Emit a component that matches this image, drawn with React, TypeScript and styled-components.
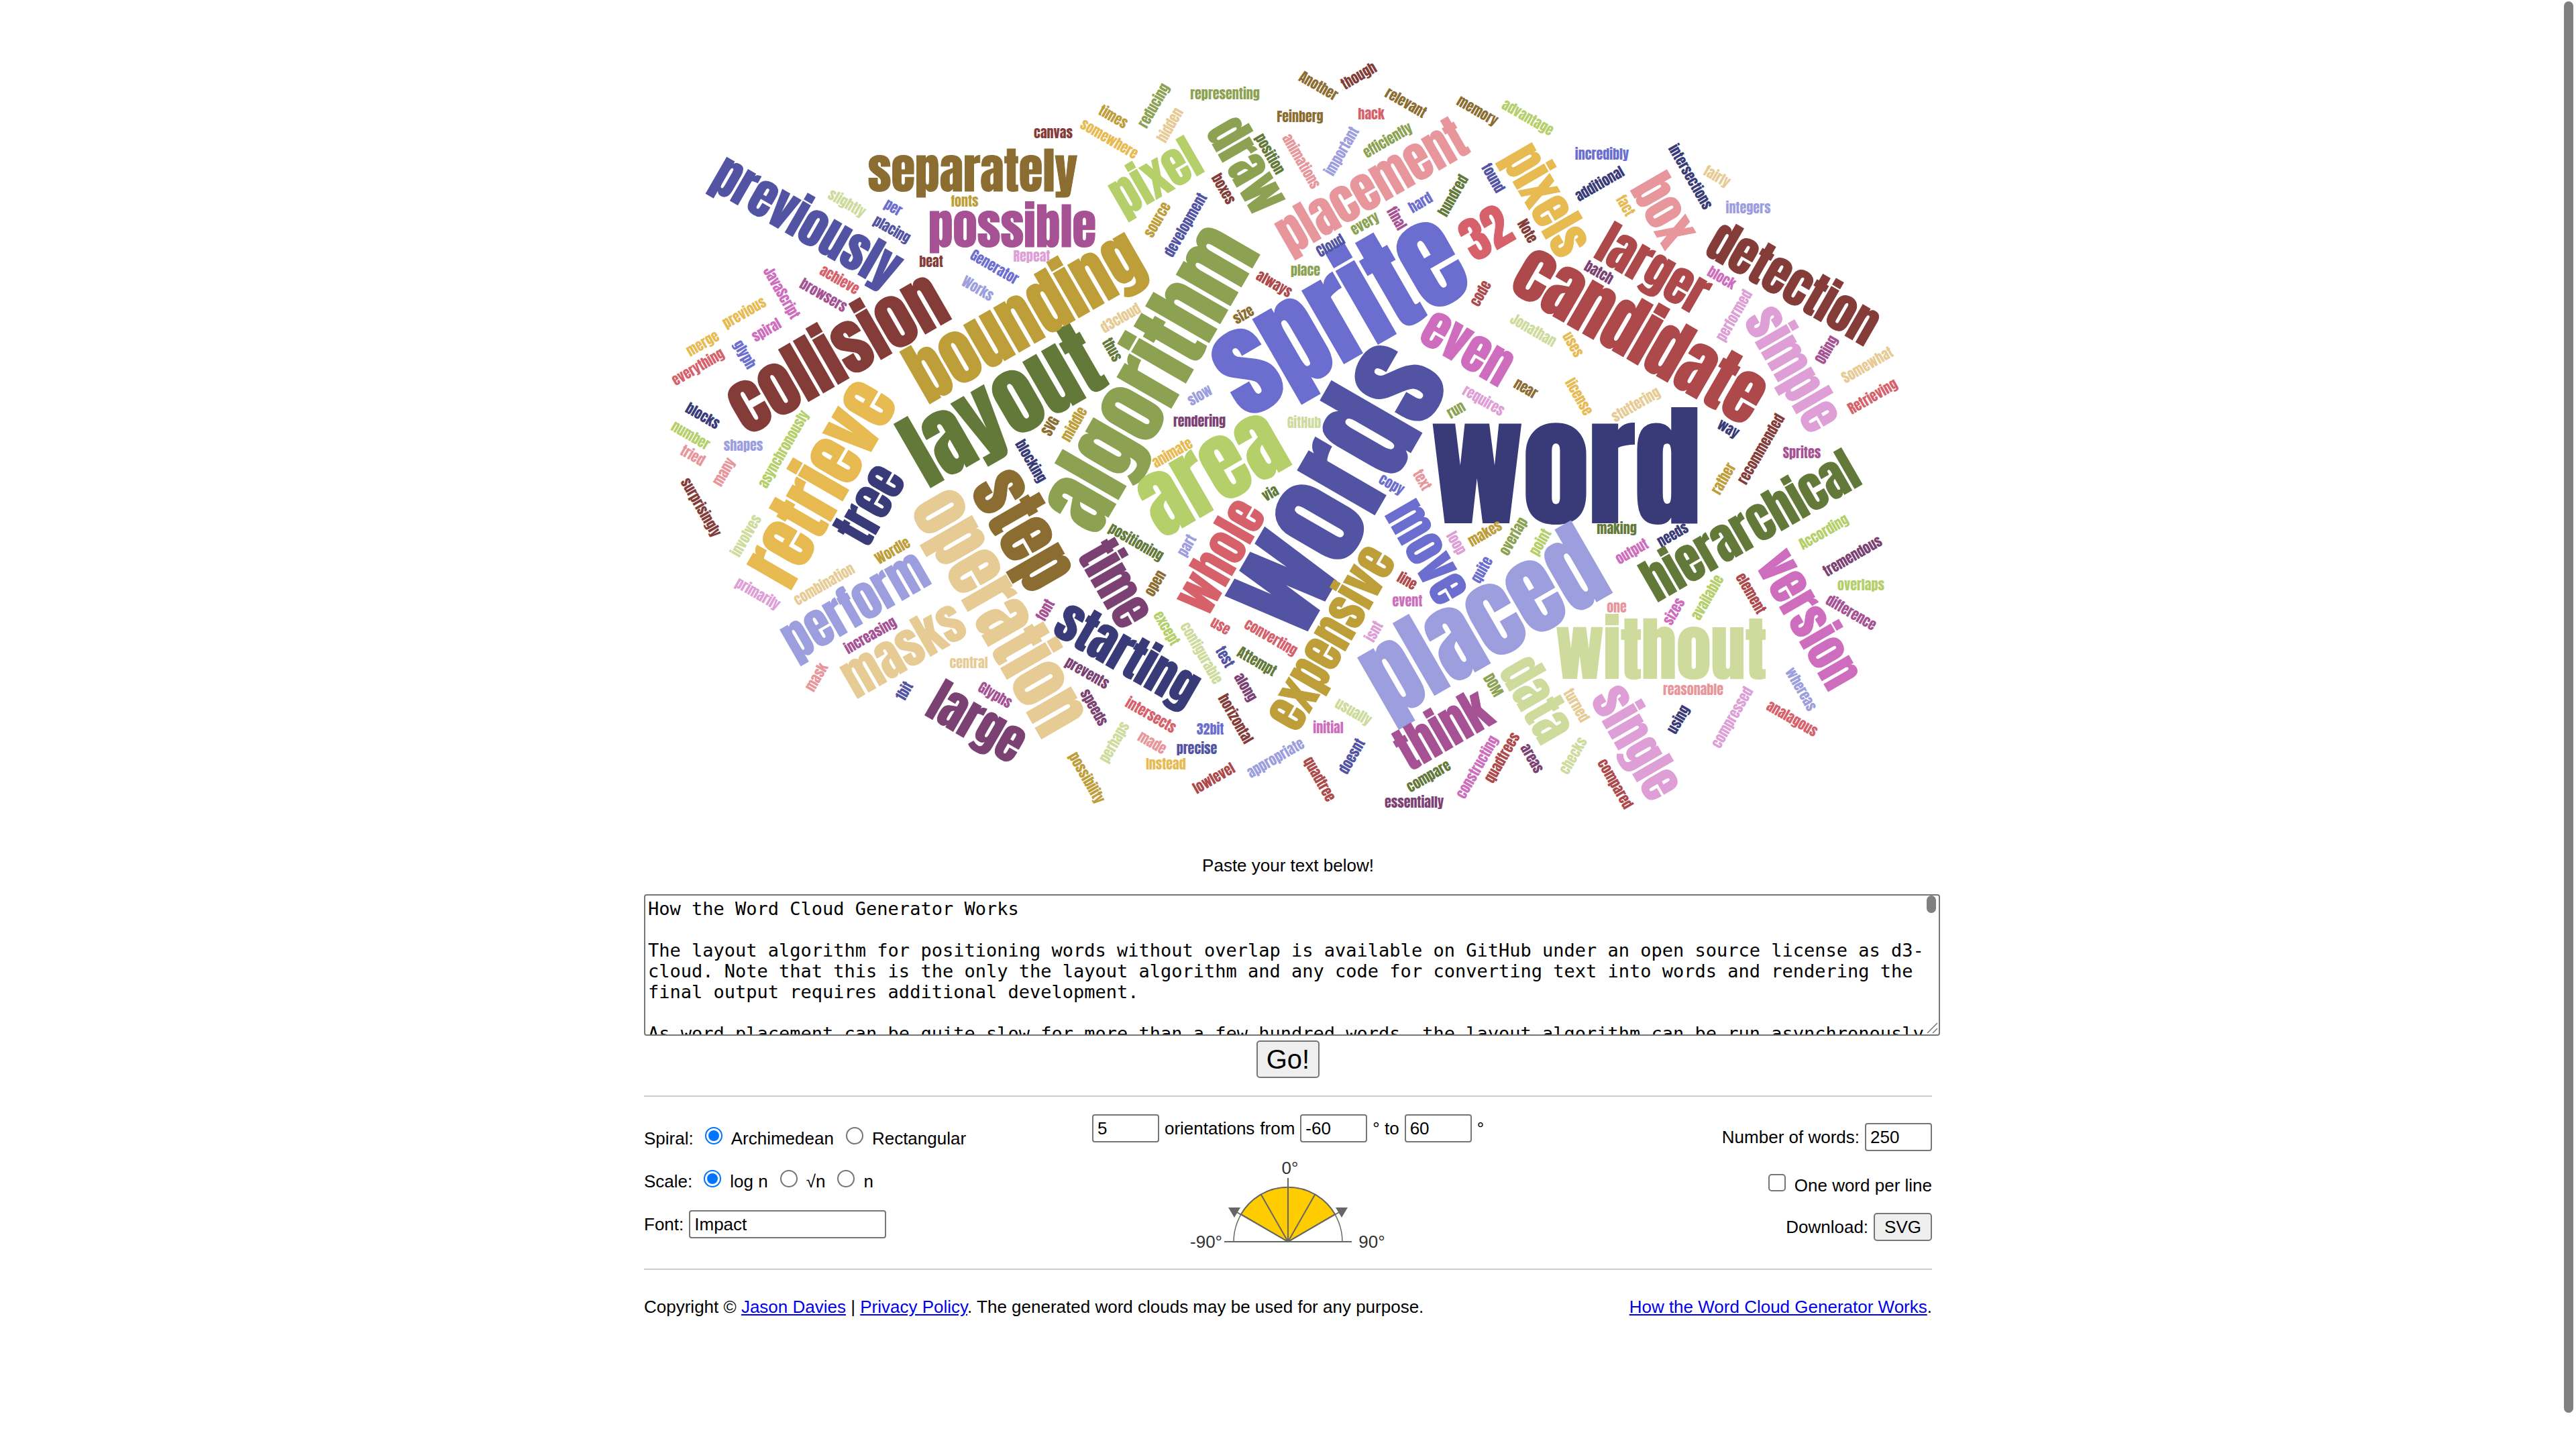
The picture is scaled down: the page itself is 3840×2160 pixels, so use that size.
import React, { useState } from 'react';
import styled, { createGlobalStyle } from 'styled-components';

const GlobalStyle = createGlobalStyle`
  body {
    margin: 0;
    background: #fff;
    color: #000;
    font-family: "Helvetica Neue", Helvetica, "Liberation Sans", Arial, sans-serif;
    font-size: 26px;
    line-height: 30px;
  }
`;

/* ---------- word cloud data ---------- */

const palette = [
  '#393b79', '#5254a3', '#6b6ecf', '#9c9ede',
  '#637939', '#8ca252', '#b5cf6b', '#cedb9c',
  '#8c6d31', '#bd9e39', '#e7ba52', '#e7cb94',
  '#843c39', '#ad494a', '#d6616b', '#e7969c',
  '#7b4173', '#a55194', '#ce6dbd', '#de9ed6',
];

/* font size for a word, by how often it occurs in the text */
const sizes: Record<number, number> = { 1: 20, 2: 73, 3: 103, 4: 126, 5: 142, 7: 169, 8: 179, 10: 197 };

/* outline that thickens the letters of the larger words */
const outlines: Record<number, number> = { 1: 0, 2: 1, 3: 2, 4: 2, 5: 3, 7: 3, 8: 3, 10: 4 };

/* text, x, y, rotation, occurrences, palette index */
type Word = [string, number, number, number, number, number];

const words: Word[] = [
  ['word', 2334, 707, 0, 10, 0],
  ['words', 1996, 730, -60, 8, 1],
  ['sprite', 1998, 474, -30, 7, 2],
  ['placed', 2214, 933, -30, 5, 3],
  ['layout', 1497, 611, -30, 4, 4],
  ['algorithm', 1718, 566, -60, 4, 5],
  ['area', 1808, 708, -30, 4, 6],
  ['without', 2476, 974, 0, 3, 7],
  ['step', 1522, 791, 60, 3, 8],
  ['bounding', 1531, 475, -30, 3, 9],
  ['retrieve', 1227, 722, -60, 3, 10],
  ['operation', 1487, 913, 60, 3, 11],
  ['collision', 1249, 530, -30, 3, 12],
  ['candidate', 2443, 502, 30, 3, 13],
  ['32', 2217, 351, -30, 2, 14],
  ['placement', 2046, 281, -30, 2, 15],
  ['large', 1455, 1080, 30, 2, 16],
  ['possible', 1509, 342, 0, 2, 17],
  ['even', 2186, 520, 30, 2, 18],
  ['simple', 2670, 551, 60, 2, 19],
  ['starting', 1679, 979, 30, 2, 0],
  ['previously', 1201, 334, 30, 2, 1],
  ['move', 2126, 824, 60, 2, 2],
  ['perform', 1276, 905, -30, 2, 3],
  ['hierarchical', 2611, 787, -30, 2, 4],
  ['draw', 1856, 248, 60, 2, 5],
  ['pixel', 1724, 267, -30, 2, 6],
  ['data', 2288, 1044, 60, 2, 7],
  ['separately', 1450, 259, 0, 2, 8],
  ['expensive', 1986, 952, -60, 2, 9],
  ['pixels', 2302, 300, 60, 2, 10],
  ['masks', 1348, 971, -30, 2, 11],
  ['detection', 2672, 425, 30, 2, 12],
  ['larger', 2463, 404, 30, 2, 13],
  ['whole', 1822, 831, -60, 2, 14],
  ['box', 2478, 315, 60, 2, 15],
  ['time', 1660, 872, 60, 2, 16],
  ['think', 2153, 1091, -30, 2, 17],
  ['version', 2694, 925, 60, 2, 18],
  ['single', 2437, 1108, 60, 2, 19],
  ['tree', 1300, 754, -60, 2, 0],
  ['slightly', 1262, 304, 30, 1, 7],
  ['per', 1331, 310, 30, 1, 2],
  ['placing', 1329, 343, 30, 1, 1],
  ['fonts', 1438, 301, 0, 1, 9],
  ['beat', 1388, 391, 0, 1, 12],
  ['achieve', 1251, 418, 30, 1, 14],
  ['browsers', 1227, 441, 30, 1, 17],
  ['JavaScript', 1164, 437, 60, 1, 18],
  ['previous', 1110, 467, -30, 1, 10],
  ['Generator', 1482, 399, 30, 1, 2],
  ['Works', 1457, 431, 30, 1, 3],
  ['Repeat', 1538, 383, 0, 1, 19],
  ['canvas', 1570, 199, 0, 1, 12],
  ['times', 1659, 175, 30, 1, 9],
  ['somewhere', 1653, 208, 30, 1, 10],
  ['reducing', 1721, 158, -60, 1, 5],
  ['hidden', 1745, 187, -60, 1, 11],
  ['representing', 1826, 141, 0, 1, 5],
  ['Feinberg', 1938, 175, 0, 1, 8],
  ['position', 1892, 230, 60, 1, 4],
  ['boxes', 1823, 282, 60, 1, 12],
  ['source', 1726, 328, -60, 1, 9],
  ['development', 1768, 336, -60, 1, 1],
  ['always', 1899, 424, 30, 1, 13],
  ['size', 1854, 470, -30, 1, 8],
  ['d3cloud', 1671, 475, -30, 1, 11],
  ['merge', 1048, 513, -30, 1, 10],
  ['spiral', 1143, 493, -30, 1, 18],
  ['glyph', 1109, 529, 60, 1, 2],
  ['everything', 1041, 548, -30, 1, 14],
  ['blocks', 1047, 621, 30, 1, 0],
  ['number', 1029, 650, 30, 1, 6],
  ['tried', 1032, 680, 30, 1, 15],
  ['shapes', 1108, 665, 0, 1, 3],
  ['many', 1080, 704, -60, 1, 15],
  ['asynchronously', 1169, 670, -60, 1, 6],
  ['surprisingly', 1044, 757, 60, 1, 12],
  ['involves', 1113, 799, -60, 1, 7],
  ['Wordle', 1331, 822, -30, 1, 9],
  ['combination', 1229, 872, -30, 1, 11],
  ['primarily', 1129, 886, 30, 1, 19],
  ['increasing', 1298, 948, -30, 1, 17],
  ['mask', 1218, 1010, -60, 1, 15],
  ['central', 1444, 989, 0, 1, 11],
  ['1bit', 1349, 1031, -60, 1, 1],
  ['Glyphs', 1483, 1037, 30, 1, 17],
  ['SVG', 1567, 636, -60, 1, 8],
  ['middle', 1602, 633, -60, 1, 9],
  ['thus', 1657, 522, 60, 1, 4],
  ['blocking', 1536, 688, 60, 1, 0],
  ['rendering', 1788, 629, 0, 1, 16],
  ['slow', 1789, 590, -30, 1, 3],
  ['animate', 1748, 676, -30, 1, 10],
  ['GitHub', 1944, 631, 0, 1, 7],
  ['via', 1894, 736, -30, 1, 4],
  ['positioning', 1693, 809, 30, 1, 4],
  ['part', 1770, 814, -60, 1, 3],
  ['Another', 1965, 129, 30, 1, 8],
  ['though', 2026, 114, -30, 1, 12],
  ['relevant', 2095, 154, 30, 1, 8],
  ['hack', 2044, 171, 0, 1, 14],
  ['memory', 2202, 166, 30, 1, 8],
  ['advantage', 2277, 176, 30, 1, 6],
  ['efficiently', 2069, 210, -30, 1, 5],
  ['important', 2001, 226, -60, 1, 3],
  ['animations', 1939, 241, 60, 1, 15],
  ['every', 2035, 334, -30, 1, 5],
  ['final', 2081, 326, 60, 1, 17],
  ['hard', 2118, 303, -30, 1, 2],
  ['hundred', 2167, 292, -60, 1, 4],
  ['found', 2225, 266, 60, 1, 1],
  ['Cloud', 1984, 367, -30, 1, 1],
  ['place', 1946, 404, 0, 1, 5],
  ['code', 2208, 438, -60, 1, 13],
  ['Note', 2276, 345, 60, 1, 12],
  ['incredibly', 2388, 231, 0, 1, 2],
  ['additional', 2385, 275, -30, 1, 0],
  ['batch', 2383, 407, 30, 1, 16],
  ['fact', 2422, 307, 60, 1, 10],
  ['intersections', 2519, 264, 60, 1, 0],
  ['fairly', 2559, 264, 30, 1, 11],
  ['integers', 2606, 311, 0, 1, 3],
  ['block', 2566, 415, 30, 1, 18],
  ['performed', 2586, 471, -60, 1, 19],
  ['Jonathan', 2285, 493, 30, 1, 7],
  ['uses', 2344, 514, 60, 1, 10],
  ['near', 2274, 580, 30, 1, 8],
  ['requires', 2211, 598, 30, 1, 19],
  ['run', 2171, 612, -30, 1, 5],
  ['license', 2353, 592, 60, 1, 10],
  ['stuttering', 2439, 604, -30, 1, 11],
  ['copy', 2074, 723, 30, 1, 2],
  ['text', 2119, 716, 60, 1, 15],
  ['loop', 2170, 810, 60, 1, 19],
  ['makes', 2214, 796, -30, 1, 9],
  ['overlap', 2257, 800, -60, 1, 5],
  ['point', 2297, 809, -60, 1, 6],
  ['quite', 2210, 850, -60, 1, 2],
  ['making', 2410, 789, 0, 1, 4],
  ['needs', 2494, 798, -30, 1, 0],
  ['output', 2433, 823, -30, 1, 18],
  ['way', 2576, 640, 30, 1, 0],
  ['recommended', 2626, 670, -60, 1, 12],
  ['rather', 2570, 714, -60, 1, 9],
  ['Sprites', 2686, 676, 0, 1, 17],
  ['ORing', 2724, 522, -60, 1, 17],
  ['Somewhat', 2784, 545, -30, 1, 11],
  ['Retrieving', 2792, 592, -30, 1, 14],
  ['According', 2719, 794, -30, 1, 6],
  ['tremendous', 2762, 830, -30, 1, 16],
  ['overlaps', 2774, 873, 0, 1, 6],
  ['difference', 2759, 914, 30, 1, 17],
  ['whereas', 2684, 1028, 60, 1, 3],
  ['analagous', 2671, 1072, 30, 1, 14],
  ['compressed', 2583, 1070, -60, 1, 19],
  ['using', 2503, 1073, -60, 1, 0],
  ['reasonable', 2524, 1029, 0, 1, 15],
  ['sizes', 2496, 912, -60, 1, 18],
  ['available', 2546, 891, -60, 1, 6],
  ['element', 2609, 885, 60, 1, 13],
  ['one', 2410, 906, 0, 1, 15],
  ['line', 2097, 867, 30, 1, 13],
  ['event', 2098, 897, 0, 1, 18],
  ['isnt', 2049, 942, -60, 1, 19],
  ['usually', 2017, 1062, 30, 1, 7],
  ['initial', 1980, 1086, 0, 1, 18],
  ['doesnt', 2016, 1128, -60, 1, 1],
  ['quadtree', 1966, 1162, 60, 1, 13],
  ['appropriate', 1902, 1131, -30, 1, 3],
  ['DOM', 2225, 1022, 60, 1, 5],
  ['turned', 2349, 1052, 60, 1, 11],
  ['checks', 2346, 1127, -60, 1, 7],
  ['areas', 2283, 1131, 60, 1, 16],
  ['quadtrees', 2240, 1130, -60, 1, 13],
  ['constructing', 2203, 1144, -60, 1, 18],
  ['compare', 2130, 1158, -30, 1, 4],
  ['essentially', 2108, 1197, 0, 1, 16],
  ['compared', 2407, 1169, 60, 1, 13],
  ['font', 1559, 910, -60, 1, 17],
  ['open', 1723, 870, -60, 1, 8],
  ['except', 1738, 937, 60, 1, 6],
  ['configurable', 1790, 974, 60, 1, 7],
  ['use', 1819, 934, 30, 1, 14],
  ['converting', 1894, 951, 30, 1, 14],
  ['test', 1825, 980, 60, 1, 1],
  ['Attempt', 1873, 987, 30, 1, 4],
  ['along', 1856, 1025, 60, 1, 16],
  ['prevents', 1620, 1004, 30, 1, 16],
  ['speeds', 1630, 1055, 60, 1, 16],
  ['intersects', 1715, 1067, 30, 1, 14],
  ['32bit', 1804, 1088, 0, 1, 2],
  ['precise', 1784, 1117, 0, 1, 1],
  ['Instead', 1738, 1140, 0, 1, 10],
  ['made', 1717, 1108, 30, 1, 15],
  ['perhaps', 1662, 1107, -60, 1, 7],
  ['possibility', 1619, 1160, 60, 1, 9],
  ['lowlevel', 1810, 1161, -30, 1, 13],
  ['horizontal', 1841, 1072, 60, 1, 12],
];

const sampleText = `How the Word Cloud Generator Works

The layout algorithm for positioning words without overlap is available on GitHub under an open source license as d3-cloud. Note that this is the only the layout algorithm and any code for converting text into words and rendering the final output requires additional development.

As word placement can be quite slow for more than a few hundred words, the layout algorithm can be run asynchronously, with a configurable time step size. This makes it possible to animate words as they are placed without stuttering. It is recommended to always use a time step even without animations as it prevents the browser's event loop from blocking while placing the words.`;

/* ---------- styled parts ---------- */

const Page = styled.main`
  position: relative;
  padding: 0 40px 180px;
`;

const Content = styled.div`
  max-width: 1920px;
  margin: 0 auto;
`;

const CloudSvg = styled.svg`
  display: block;
  width: 100%;
  height: auto;
`;

const CloudWord = styled.text<{ $count: number; $color: number }>`
  font-family: Anton, Impact, "Roboto Condensed", sans-serif;
  font-weight: 400;
  font-size: ${(p) => sizes[p.$count]}px;
  text-anchor: middle;
  fill: ${(p) => palette[p.$color]};
  stroke: ${(p) => palette[p.$color]};
  stroke-width: ${(p) => outlines[p.$count]}px;
`;

const PasteLabel = styled.label`
  display: block;
  margin: 35px 0 28px;
  text-align: center;
`;

const TextArea = styled.textarea`
  display: block;
  box-sizing: border-box;
  width: 100%;
  height: 211px;
  margin: 0;
  padding: 4px;
  border: 2px solid #767676;
  border-radius: 4px;
  background: #fff;
  color: #000;
  font-family: Menlo, "DejaVu Sans Mono", monospace;
  font-size: 27px;
  line-height: 31px;
  overflow: hidden;
  resize: none;
`;

const TextBox = styled.div`
  position: relative;
  margin-right: -12px;
`;

const ScrollThumb = styled.div`
  position: absolute;
  top: 2px;
  right: 6px;
  width: 14px;
  height: 26px;
  border-radius: 7px;
  background: #808080;
`;

const PageThumb = styled(ScrollThumb)`
  right: 4px;
  height: 2104px;
  position: fixed;
`;

const ResizeGrip = styled.svg`
  position: absolute;
  right: 3px;
  bottom: 3px;
`;

const Button = styled.button<{ $large?: boolean }>`
  box-sizing: border-box;
  height: ${(p) => (p.$large ? 56 : 42)}px;
  padding: 0 ${(p) => (p.$large ? 13 : 14)}px;
  border: 2px solid #767676;
  border-radius: 5px;
  background: #efefef;
  color: #000;
  font-family: inherit;
  font-size: ${(p) => (p.$large ? 40 : 26)}px;
  line-height: 1;
`;

const GoRow = styled.div`
  display: flex;
  justify-content: center;
  padding: 7px 0 26px;
`;

const Rule = styled.hr`
  height: 2px;
  margin: 0;
  border: 0;
  background: #ccc;
`;

const Controls = styled.div`
  display: grid;
  grid-template-columns: 1fr auto 1fr;
  padding-bottom: 26px;
`;

const Column = styled.div<{ $top: number; $gap: number; $align: string }>`
  display: flex;
  flex-direction: column;
  align-items: ${(p) => p.$align};
  gap: ${(p) => p.$gap}px;
  padding-top: ${(p) => p.$top}px;
`;

const Row = styled.div`
  display: flex;
  align-items: center;
  gap: 8px;
  height: 42px;
  white-space: nowrap;
`;

const Caption = styled.span`
  margin-right: 9px;
`;

const Choice = styled.label`
  display: flex;
  align-items: center;
  gap: 13px;
  margin-right: 10px;
`;

const CheckChoice = styled.label`
  display: flex;
  align-items: center;
  gap: 13px;
  padding-top: 10px;
`;

const Radio = styled.input`
  appearance: none;
  box-sizing: border-box;
  width: 26px;
  height: 26px;
  margin: 0 0 8px;
  padding: 3px;
  border: 2px solid #767676;
  border-radius: 50%;
  background: #fff content-box;

  &:checked {
    border-color: #0075ff;
    background-color: #0075ff;
  }
`;

const Checkbox = styled.input`
  appearance: none;
  box-sizing: border-box;
  width: 26px;
  height: 26px;
  margin: 0 0 8px;
  border: 2px solid #767676;
  border-radius: 5px;
  background: #fff;

  &:checked {
    background: #0075ff;
  }
`;

const Field = styled.input<{ $wide?: boolean }>`
  appearance: textfield;
  box-sizing: border-box;
  width: ${(p) => (p.$wide ? 294 : 100)}px;
  height: 42px;
  padding: 0 6px;
  border: 2px solid #767676;
  border-radius: 4px;
  background: #fff;
  color: #000;
  font-family: inherit;
  font-size: 26px;
`;

const DialText = styled.text`
  font-family: inherit;
  font-size: 26px;
  fill: #333;
  text-anchor: middle;
`;

const Footer = styled.footer`
  display: flex;
  justify-content: space-between;
  padding-top: 40px;
`;

const Link = styled.a`
  color: #0000ee;
  text-decoration: underline;
`;

/* ---------- components ---------- */

function Cloud() {
  return (
    <CloudSvg viewBox="960 0 1920 1240" role="img" aria-label="Word cloud">
      {words.map(([text, x, y, angle, count, color]) => (
        <CloudWord
          key={text}
          $count={count}
          $color={color}
          transform={`translate(${x},${y}) rotate(${angle})`}
          dy={Math.round(sizes[count] * 0.36)}
        >
          {text}
        </CloudWord>
      ))}
    </CloudSvg>
  );
}

function OrientationDial() {
  const radius = 81;
  const at = (deg: number, r: number) => {
    const a = (deg * Math.PI) / 180;
    return `${Math.round(r * Math.sin(a))},${Math.round(-r * Math.cos(a))}`;
  };
  return (
    <svg width="320" height="144" viewBox="-160 -130 320 144" role="img" aria-label="Orientation range">
      <path d={`M${at(-90, radius)}A${radius},${radius} 0 0 1 ${at(90, radius)}`} fill="none" stroke="#666" strokeWidth="1.5" />
      <path d={`M0,0L${at(-60, radius)}A${radius},${radius} 0 0 1 ${at(60, radius)}Z`} fill="#fc0" stroke="#666" strokeWidth="2" />
      {[-60, -30, 30, 60].map((deg) => (
        <path key={deg} d={`M0,0L${at(deg, Math.abs(deg) === 60 ? 90 : radius)}`} stroke="#666" strokeWidth="2" />
      ))}
      <path d="M-95,0H95M0,0V-95" stroke="#666" strokeWidth="2" />
      <path d="M-89,-51h18l-9,15zM71,-51h18l-9,15z" fill="#666" />
      <DialText x="3" y="-101">0°</DialText>
      <DialText x="-122" y="9">-90°</DialText>
      <DialText x="125" y="9">90°</DialText>
    </svg>
  );
}

export default function App() {
  const [spiral, setSpiral] = useState('archimedean');
  const [scale, setScale] = useState('log');

  return (
    <Page>
      <GlobalStyle />
      <Content>
        <Cloud />
        <form onSubmit={(e) => e.preventDefault()}>
          <PasteLabel htmlFor="text">Paste your text below!</PasteLabel>
          <TextBox>
            <TextArea id="text" defaultValue={sampleText} spellCheck={false} />
            <ScrollThumb />
            <ResizeGrip width="18" height="18" viewBox="0 0 18 18" aria-hidden="true">
              <path d="M2,17L17,2M10,17L17,10" stroke="#767676" strokeWidth="1.5" />
            </ResizeGrip>
          </TextBox>
          <GoRow>
            <Button $large type="submit">Go!</Button>
          </GoRow>
          <Rule />
          <Controls>
            <Column $top={41} $gap={22} $align="flex-start">
              <Row>
                <Caption>Spiral:</Caption>
                <Choice>
                  <Radio type="radio" name="spiral" checked={spiral === 'archimedean'} onChange={() => setSpiral('archimedean')} />
                  Archimedean
                </Choice>
                <Choice>
                  <Radio type="radio" name="spiral" checked={spiral === 'rectangular'} onChange={() => setSpiral('rectangular')} />
                  Rectangular
                </Choice>
              </Row>
              <Row>
                <Caption>Scale:</Caption>
                <Choice>
                  <Radio type="radio" name="scale" checked={scale === 'log'} onChange={() => setScale('log')} />
                  log n
                </Choice>
                <Choice>
                  <Radio type="radio" name="scale" checked={scale === 'sqrt'} onChange={() => setScale('sqrt')} />
                  √n
                </Choice>
                <Choice>
                  <Radio type="radio" name="scale" checked={scale === 'linear'} onChange={() => setScale('linear')} />
                  n
                </Choice>
              </Row>
              <Row>
                <label htmlFor="font">Font:</label>
                <Field $wide id="font" type="text" defaultValue="Impact" />
              </Row>
            </Column>
            <Column $top={26} $gap={18} $align="center">
              <Row>
                <Field id="count" type="number" defaultValue="5" />
                <label htmlFor="count">orientations</label>
                <label htmlFor="from">from</label>
                <Field id="from" type="number" defaultValue="-60" />
                <label htmlFor="to">° to</label>
                <Field id="to" type="number" defaultValue="60" />
                <span>°</span>
              </Row>
              <OrientationDial />
            </Column>
            <Column $top={39} $gap={25} $align="flex-end">
              <Row>
                <label htmlFor="max">Number of words:</label>
                <Field id="max" type="number" defaultValue="250" />
              </Row>
              <Row>
                <CheckChoice>
                  <Checkbox type="checkbox" />
                  One word per line
                </CheckChoice>
              </Row>
              <Row>
                <span>Download:</span>
                <Button type="button">SVG</Button>
              </Row>
            </Column>
          </Controls>
          <Rule />
        </form>
        <Footer>
          <span>
            Copyright © <Link href="#about">Jason Davies</Link> | <Link href="#privacy">Privacy Policy</Link>. The
            generated word clouds may be used for any purpose.
          </span>
          <span>
            <Link href="#how">How the Word Cloud Generator Works</Link>.
          </span>
        </Footer>
      </Content>
      <PageThumb />
    </Page>
  );
}
